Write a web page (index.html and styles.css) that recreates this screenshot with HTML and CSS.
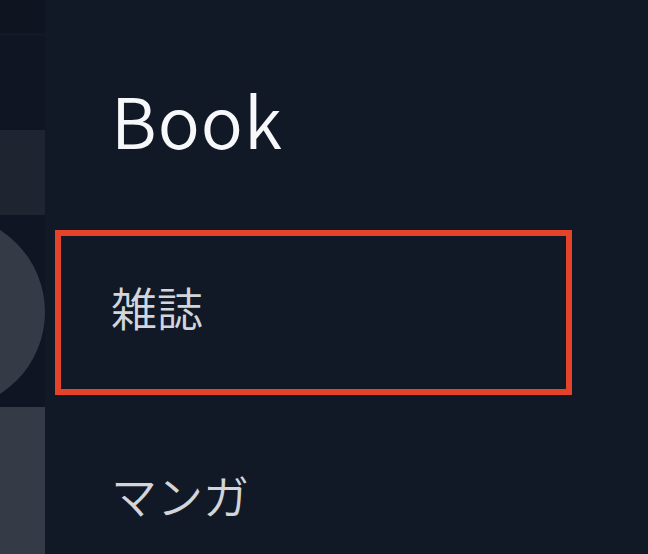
FILE: index.html
```html
<!DOCTYPE html>
<html lang="ja">
<head>
    <meta charset="UTF-8">
    <meta name="viewport" content="width=device-width, initial-scale=1.0">
    <title>Book</title>
    <link rel="stylesheet" href="styles.css">
</head>
<body>
    <div class="layout">
        <div class="rail">
            <div class="rail-top"></div>
            <div class="rail-gap"></div>
            <div class="rail-block"></div>
            <div class="rail-avatar">
                <div class="avatar"></div>
            </div>
            <div class="rail-bottom"></div>
        </div>

        <div class="menu">
            <h2 class="menu-title">Book</h2>
            <ul class="menu-list">
                <li class="menu-item active">雑誌</li>
                <li class="menu-item">マンガ</li>
            </ul>
        </div>
    </div>
</body>
</html>
```

FILE: styles.css
```css
body {
    margin: 0;
    background-color: #121926;
    font-family: "Noto Sans CJK JP", "Liberation Sans", sans-serif;
    overflow: hidden;
}
.layout {
    display: flex;
    height: 554px;
    overflow: hidden;
}
.rail {
    width: 45px;
    flex-shrink: 0;
    display: flex;
    flex-direction: column;
    background: #0f1522;
    overflow: hidden;
}
.rail-top {
    height: 33px;
    background: #0e1420;
    border-bottom: 3px solid #111827;
}
.rail-gap {
    height: 94px;
}
.rail-block {
    height: 85px;
    background: #1e2430;
}
.rail-avatar {
    height: 192px;
    position: relative;
}
.avatar {
    position: absolute;
    left: -149px;
    top: 0;
    width: 194px;
    height: 194px;
    border-radius: 50%;
    background: #353b46;
}
.rail-bottom {
    flex: 1;
    background: #353b46;
}
.menu {
    flex: 1;
    padding-left: 10px;
    padding-top: 72px;
}
.menu-title {
    margin: 0;
    height: 100px;
    box-sizing: border-box;
    display: flex;
    align-items: center;
    padding-left: 56px;
    padding-bottom: 7px;
    font-size: 70px;
    font-weight: 350;
    letter-spacing: 1px;
    color: #f7f8fa;
}
.menu-list {
    list-style: none;
    margin: 58px 0 0 0;
    padding: 0;
    width: 517px;
}
.menu-item {
    height: 165px;
    box-sizing: border-box;
    border: 6px solid transparent;
    display: flex;
    align-items: center;
    padding-left: 50px;
    padding-bottom: 14px;
    font-size: 46px;
    font-weight: 350;
    color: #d2d5da;
    margin-bottom: 23px;
}
.menu-item.active {
    border-color: #e4432a;
}
```
